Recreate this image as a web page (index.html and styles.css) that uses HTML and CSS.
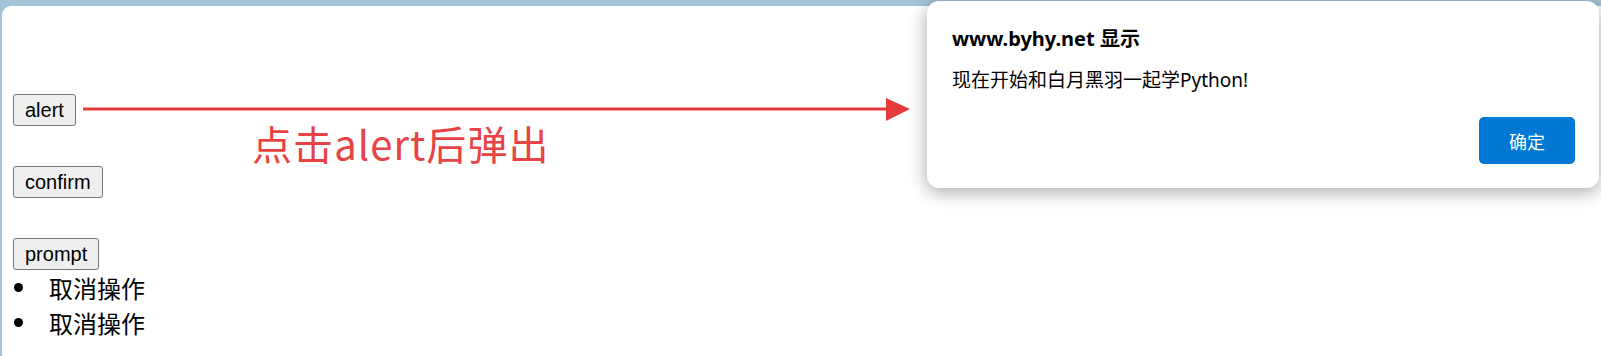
FILE: index.html
```html
<!DOCTYPE html>
<html lang="zh">
<head>
    <meta charset="UTF-8">
    <meta name="viewport" content="width=device-width, initial-scale=1.0">
    <title>alert</title>
    <link rel="stylesheet" href="styles.css">
</head>
<body>
    <div class="window">
        <div class="buttons">
            <button>alert</button>
            <button>confirm</button>
            <button>prompt</button>
        </div>
        <ul class="result">
            <li>取消操作</li>
            <li>取消操作</li>
        </ul>

        <!-- annotation drawn over the screenshot -->
        <svg class="arrow" width="830" height="25" viewBox="0 0 830 25">
            <line x1="0" y1="12" x2="805" y2="12" stroke="#e53b3c" stroke-width="3"/>
            <polygon points="803,1 827,12 803,24" fill="#e53b3c"/>
        </svg>
        <div class="note">点击alert后弹出</div>
    </div>

    <div class="dialog">
        <div class="dialog-title">www.byhy.net 显示</div>
        <div class="dialog-msg">现在开始和白月黑羽一起学Python!</div>
        <div class="dialog-foot">
            <button class="ok">确定</button>
        </div>
    </div>
</body>
</html>
```

FILE: styles.css
```css
html {
    background-color: #a3c3d8;
}

body {
    margin: 0px;
    padding: 6px 0 0 2px;
    height: 350px;
    overflow: hidden;
    font-family: "Noto Sans CJK SC", sans-serif;
}

.window {
    position: relative;
    background-color: #fff;
    border-top-left-radius: 9px;
    height: 350px;
    padding: 88px 0 0 11px;
    box-sizing: border-box;
}

.buttons {
    display: flex;
    flex-direction: column;
    align-items: flex-start;
    gap: 40px;
}

.buttons button {
    font-family: "Liberation Sans", Arial, sans-serif;
    font-size: 20px;
    height: 32px;
    padding: 0 11px;
    border: 1px solid #767676;
    border-radius: 3px;
    background-color: #efefef;
    color: #000;
}

.result {
    list-style: none;
    margin: 0;
    padding: 0;
}

.result li {
    display: flex;
    align-items: center;
    height: 35px;
    font-size: 24px;
    color: #000;
}

.result li::before {
    content: "";
    width: 9px;
    height: 9px;
    border-radius: 50%;
    background-color: #000;
    margin: 0 26px 0 1px;
}

.arrow {
    position: absolute;
    left: 81px;
    top: 91px;
}

.note {
    position: absolute;
    left: 250px;
    top: 113px;
    font-size: 40px;
    line-height: 1.2;
    letter-spacing: 1.1px;
    color: #e84344;
}

.dialog {
    position: absolute;
    left: 927px;
    top: 1px;
    width: 672px;
    height: 187px;
    box-sizing: border-box;
    padding: 24px 24px 24px 25px;
    display: flex;
    flex-direction: column;
    background-color: #fff;
    border-radius: 12px;
    box-shadow: 0 4px 18px rgba(0, 0, 0, 0.35);
    font-family: "Noto Sans", "Noto Sans CJK SC", sans-serif;
    color: #000;
}

.dialog-title {
    font-size: 20px;
    font-weight: bold;
    line-height: 28px;
}

.dialog-msg {
    margin-top: 13px;
    font-size: 19px;
    line-height: 28px;
}

.dialog-foot {
    margin-top: auto;
    display: flex;
    justify-content: flex-end;
}

.ok {
    width: 96px;
    height: 47px;
    border: none;
    border-radius: 5px;
    background-color: #0078d4;
    color: #fff;
    font-family: "Noto Sans CJK SC", sans-serif;
    font-size: 18px;
}
```
